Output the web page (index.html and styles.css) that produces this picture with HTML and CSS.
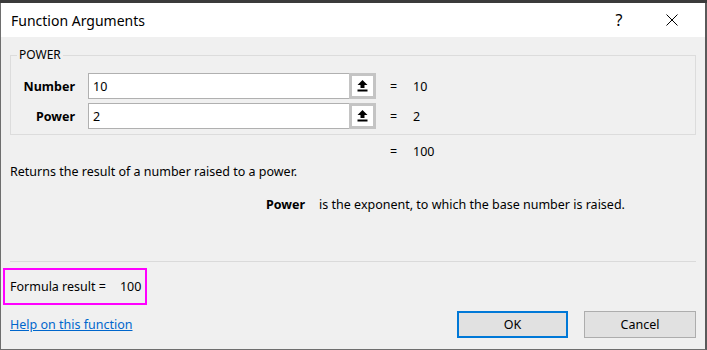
FILE: index.html
```html
<!DOCTYPE html>
<html lang="en">
<head>
  <meta charset="UTF-8">
  <title>Function Arguments</title>
  <link rel="stylesheet" href="styles.css">
</head>
<body>

  <div class="dialog">
    <div class="titlebar">
      <span class="title">Function Arguments</span>
      <span class="help-btn">?</span>
      <span class="close-btn">
        <svg width="12" height="12" viewBox="0 0 12 12">
          <path d="M0.5 0.5 L11.5 11.5 M11.5 0.5 L0.5 11.5" stroke="#000" stroke-width="1" fill="none" />
        </svg>
      </span>
    </div>

    <div class="content">
      <fieldset class="group">
        <legend>POWER</legend>
        <div class="args">
          <label class="arg-label">Number</label>
          <div class="arg-input">
            <span class="arg-value">10</span>
            <span class="collapse">
              <svg width="11" height="12" viewBox="0 0 11 12">
                <path d="M5.5 0 L0.5 5 H3.5 V8 H7.5 V5 H10.5 Z" fill="#000" />
                <rect x="0.5" y="9.5" width="10" height="2" fill="#000" />
              </svg>
            </span>
          </div>
          <div class="arg-result"><span class="eq">=</span>10</div>

          <label class="arg-label">Power</label>
          <div class="arg-input">
            <span class="arg-value">2</span>
            <span class="collapse">
              <svg width="11" height="12" viewBox="0 0 11 12">
                <path d="M5.5 0 L0.5 5 H3.5 V8 H7.5 V5 H10.5 Z" fill="#000" />
                <rect x="0.5" y="9.5" width="10" height="2" fill="#000" />
              </svg>
            </span>
          </div>
          <div class="arg-result"><span class="eq">=</span>2</div>
        </div>
      </fieldset>

      <div class="total"><span class="eq">=</span>100</div>
      <p class="summary">Returns the result of a number raised to a power.</p>
      <p class="arg-help"><b>Power</b>is the exponent, to which the base number is raised.</p>

      <div class="divider"></div>

      <div class="formula">Formula result =<span class="formula-value">100</span></div>

      <div class="footer">
        <a class="help-link" href="#">Help on this function</a>
        <div class="buttons">
          <button class="btn btn-default">OK</button>
          <button class="btn">Cancel</button>
        </div>
      </div>
    </div>
  </div>

</body>
</html>
```

FILE: styles.css
```css
body {
  margin: 0;
  padding-top: 3px;
  background-color: #3b3b3b;
  font-family: "Noto Sans", "Open Sans", sans-serif;
  font-size: 12.5px;
  color: #000;
  overflow: hidden;
}

.dialog {
  height: 346px;
  border-left: 1px solid #6e6e6e;
  border-right: 2px solid #5a5a5a;
  border-bottom: 1px solid #6e6e6e;
  background-color: #f0f0f0;
  display: flex;
  flex-direction: column;
}

.titlebar {
  height: 34px;
  background-color: #fff;
  display: flex;
  align-items: center;
  padding-left: 10px;
}

.title {
  font-size: 14px;
  flex: 1;
}

.help-btn {
  font-size: 16px;
  width: 46px;
  text-align: center;
  margin-right: 7px;
}

.close-btn {
  width: 46px;
  display: flex;
  justify-content: center;
  margin-right: 10px;
}

.content {
  flex: 1;
  padding: 0 9px;
  display: flex;
  flex-direction: column;
}

.group {
  margin: 11px 0 0;
  padding: 11px 0 5px;
  border: 1px solid #dcdcdc;
  min-width: 0;
}

.group legend {
  margin-left: 6px;
  padding: 0 2px;
  line-height: 14px;
  font-size: 12px;
}

.args {
  display: grid;
  grid-template-columns: 64px 288px auto;
  grid-auto-rows: 26px;
  row-gap: 4px;
  column-gap: 13px;
  align-items: center;
}

.arg-label {
  font-weight: bold;
  text-align: right;
}

.arg-input {
  height: 26px;
  box-sizing: border-box;
  border: 1px solid #b0b0b0;
  background-color: #fff;
  display: flex;
  align-items: center;
}

.arg-value {
  flex: 1;
  padding-left: 4px;
}

.collapse {
  width: 27px;
  height: 26px;
  margin: -1px -1px -1px 0;
  box-sizing: border-box;
  border: 3px solid #c4c4c4;
  background-color: #fff;
  display: flex;
  align-items: center;
  justify-content: center;
}

.eq {
  display: inline-block;
  width: 23px;
}

.arg-result {
  padding-left: 1px;
}

.total {
  margin: 9px 0 0 380px;
  line-height: 16px;
}

.summary {
  margin: 4px 0 0;
  line-height: 16px;
}

.arg-help {
  margin: 17px 0 0 256px;
  line-height: 16px;
}

.arg-help b {
  margin-right: 14px;
}

.divider {
  margin-top: 48px;
  border-top: 1px solid #dadada;
}

.formula {
  align-self: flex-start;
  margin: 6px 0 0 -7px;
  height: 37px;
  box-sizing: border-box;
  padding: 0 4px 0 5px;
  border: 2px solid #ff00ff;
  display: flex;
  align-items: center;
}

.formula-value {
  margin-left: 14px;
}

.footer {
  margin-top: 6px;
  display: flex;
  align-items: center;
  justify-content: space-between;
}

.help-link {
  color: #0066cc;
  text-decoration: underline;
}

.buttons {
  display: flex;
  gap: 16px;
}

.btn {
  width: 112px;
  height: 27px;
  font-family: inherit;
  font-size: 12.5px;
  background-color: #e1e1e1;
  border: 1px solid #adadad;
  padding: 0;
}

.btn-default {
  width: 111px;
  border: 2px solid #0078d7;
}
```
